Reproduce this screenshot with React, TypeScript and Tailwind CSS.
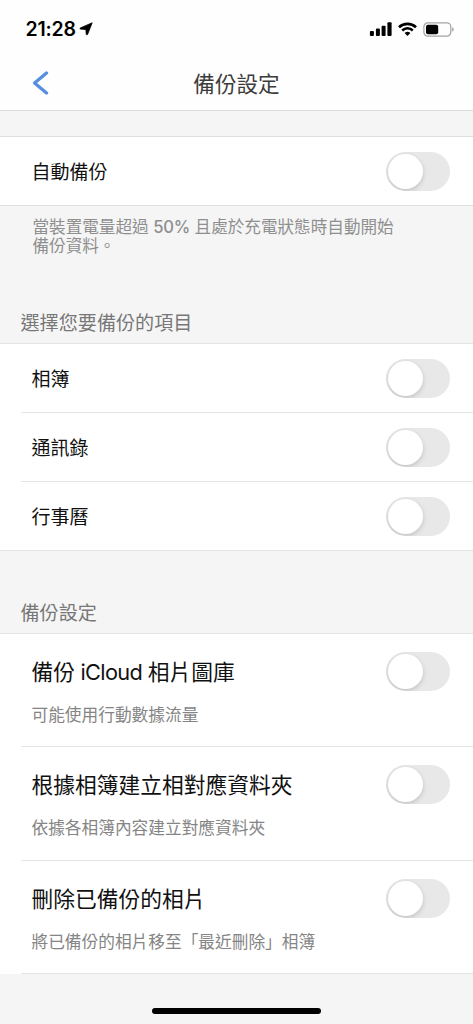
import React from "react";

const CJK = "font-['Inter','Noto_Sans_CJK_TC',sans-serif]";

function Toggle() {
  return (
    <button
      type="button"
      role="switch"
      aria-checked={false}
      className="flex h-[39px] w-16 shrink-0 items-center overflow-hidden rounded-full bg-[#e8e8e8] pl-[2px]"
    >
      <span className="size-[35px] rounded-full bg-white shadow-[0_2px_5px_rgba(0,0,0,0.17)]" />
    </button>
  );
}

function Row({ label, last = false }: { label: string; last?: boolean }) {
  return (
    <div className="pl-[21px]">
      <div
        className={`flex items-center justify-between pr-[23px] pl-[10.5px] ${
          last ? "h-[68px]" : "h-[69px] border-b border-[#e4e4e4]"
        }`}
      >
        <span className="pt-[3px] text-[19px] leading-7 text-[#111]">{label}</span>
        <Toggle />
      </div>
    </div>
  );
}

function DetailRow({ label, note, height }: { label: React.ReactNode; note: string; height: string }) {
  return (
    <div className="pl-[21px]">
      <div
        className={`flex items-start justify-between border-b border-[#e4e4e4] pt-[18px] pr-[23px] pl-[10.5px] ${height}`}
      >
        <div className="flex flex-col gap-[11px]">
          <span className="text-[21.75px] leading-10 text-[#111]">{label}</span>
          <span className="text-[16.7px] leading-6 text-[#858585]">{note}</span>
        </div>
        <Toggle />
      </div>
    </div>
  );
}

export default function App() {
  return (
    <div className={`flex h-[1024px] w-full flex-col overflow-hidden bg-[#f5f5f5] whitespace-nowrap ${CJK}`}>
      <header className="flex h-[111px] shrink-0 flex-col border-b border-[#dcdcdc] bg-[#fefefe]">
        <div className="flex h-[58px] items-center justify-between pr-[18px] pl-[25.5px]">
          <div className="flex items-center gap-[3px]">
            <span className="text-[19.5px] leading-6 font-semibold tracking-[-0.2px] text-black">21:28</span>
            <svg width="14" height="14" viewBox="0 0 14 14" aria-hidden="true">
              <path
                d="M13.2.8 8.6 12.4c-.3.7-1.4.5-1.4-.3L6.9 7.6 1.6 7.1C.8 7 .7 6.2 1.4 5.9Z"
                fill="#000"
                stroke="#000"
                strokeWidth=".8"
                strokeLinejoin="round"
              />
            </svg>
          </div>
          <div className="flex items-center">
            <svg width="23" height="14" viewBox="0 0 23 14" aria-hidden="true">
              <rect x="0.9" y="9" width="4" height="5" rx="1" />
              <rect x="6.9" y="6.5" width="4" height="7.5" rx="1" />
              <rect x="12.6" y="3.7" width="4" height="10.3" rx="1" />
              <rect x="18.4" y="0.3" width="4.2" height="13.7" rx="1" />
            </svg>
            <svg className="ml-[6px]" width="19" height="14" viewBox="0 0 19 14" fill="none" stroke="#000" aria-hidden="true">
              <path d="M1 5.2a12.4 12.4 0 0 1 17 0" strokeWidth="2.7" />
              <path d="M4.2 8.5a7.6 7.6 0 0 1 10.6 0" strokeWidth="2.5" />
              <path d="M6.6 11.1a4.2 4.2 0 0 1 5.8 0L9.5 14Z" fill="#000" stroke="none" />
            </svg>
            <svg className="ml-[6px]" width="32" height="15" viewBox="0 0 32 15" aria-hidden="true">
              <rect x="0.9" y="0.8" width="26.9" height="13.4" rx="4" fill="none" stroke="#a2a2a2" strokeWidth="1.2" />
              <rect x="3" y="2.7" width="12.2" height="9.6" rx="2" />
              <path d="M29.2 5.3c2 .6 2 3.8 0 4.4Z" fill="#a2a2a2" />
            </svg>
          </div>
        </div>
        <div className="grid h-[50px] grid-cols-[80px_1fr_80px] items-center">
          <button type="button" aria-label="返回" className="pl-[32px]">
            <svg width="18" height="24" viewBox="0 0 18 24" fill="none" aria-hidden="true">
              <path d="M14.5 2 2.6 12l11.9 10" stroke="#568fe0" strokeWidth="3.3" strokeLinecap="round" strokeLinejoin="round" />
            </svg>
          </button>
          <h1 className="pt-[2px] text-center text-[21.6px] leading-8 font-normal text-[#3c3c3c]">備份設定</h1>
        </div>
      </header>

      <section className="mt-[25px] shrink-0 border-y border-[#dedede] bg-white">
        <Row label="自動備份" last />
      </section>
      <p className="mt-[12px] h-[37px] shrink-0 pl-[32.5px] text-[16.6px] leading-[19px] text-[#8f8f8f]">
        當裝置電量超過 <span className="font-medium tracking-[-0.3px]">50%</span> 且處於充電狀態時自動開始
        <br />
        備份資料。
      </p>

      <h2 className="mt-[54px] h-[34px] shrink-0 pl-[20.5px] text-[19.1px] leading-7 text-[#777]">選擇您要備份的項目</h2>
      <section className="shrink-0 border-y border-[#e4e4e4] bg-white">
        <Row label="相簿" />
        <Row label="通訊錄" />
        <Row label="行事曆" last />
      </section>

      <h2 className="mt-[48px] h-[34px] shrink-0 pl-[20.5px] text-[19.1px] leading-7 text-[#777]">備份設定</h2>
      <section className="shrink-0 border-t border-[#e4e4e4] bg-white">
        <DetailRow
          label={
            <>
              備份<span className="tracking-[-0.65px]"> iCloud </span>相片圖庫
            </>
          }
          note="可能使用行動數據流量"
          height="h-[113px]"
        />
        <DetailRow label="根據相簿建立相對應資料夾" note="依據各相簿內容建立對應資料夾" height="h-[114px]" />
        <DetailRow label="刪除已備份的相片" note="將已備份的相片移至「最近刪除」相簿" height="h-[113px]" />
      </section>

      <div className="mt-auto mb-[10px] h-[6px] w-[169px] shrink-0 self-center rounded-full bg-black" />
    </div>
  );
}
